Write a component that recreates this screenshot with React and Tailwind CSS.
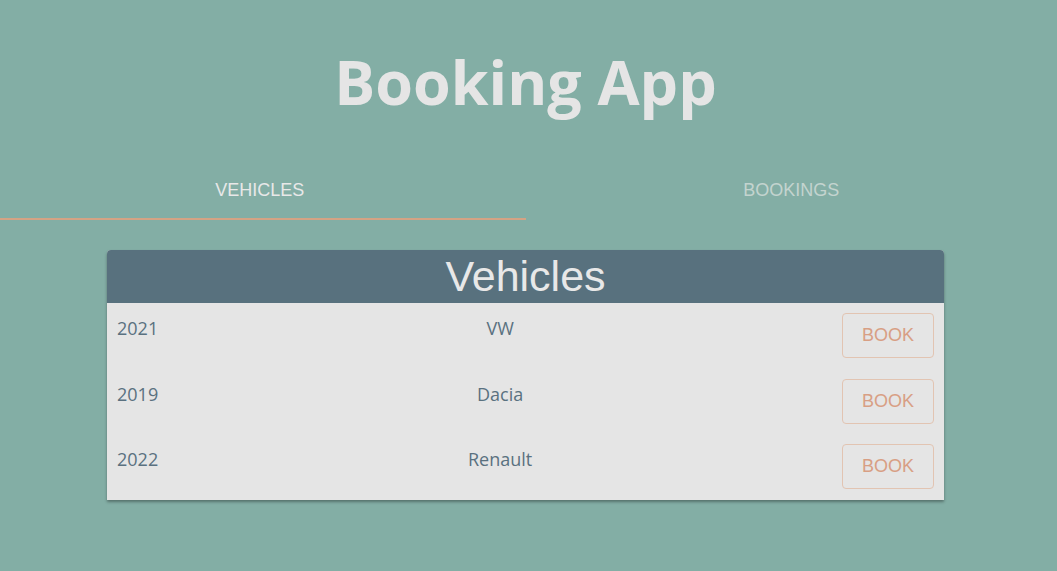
const vehicles = [
  { year: 2021, brand: 'VW' },
  { year: 2019, brand: 'Dacia' },
  { year: 2022, brand: 'Renault' },
]

function VehicleRow({ year, brand }) {
  return (
    <div className="flex justify-between items-start px-[10px] pt-[10px] pb-[10.5px]">
      <span className="text-[18px] leading-[30px] text-[#5a7180] font-['Open_Sans',sans-serif]">{year}</span>
      <span className="text-[18px] leading-[30px] text-[#5a7180] font-['Open_Sans',sans-serif]">{brand}</span>
      <button className="w-[92px] h-[45px] border border-[#e2c4b2] rounded-[4px] text-[18px] text-[#d89f84] font-['Liberation_Sans',sans-serif]">
        BOOK
      </button>
    </div>
  )
}

export default function App() {
  return (
    <div className="min-h-[571px] bg-[#83aea5] font-['Liberation_Sans',sans-serif]">
      <div className="w-[1051px]">
        <h1 className="pt-[39px] text-center text-[61px] leading-[86px] font-bold text-[#e5e5e5] font-['Open_Sans',sans-serif]">
          Booking App
        </h1>

        <div className="flex mt-[33px]">
          <div className="w-1/2 h-[62px] pt-[4px] pr-[6px] flex items-center justify-center border-b-2 border-[#d4a384] text-[18px] text-[#e8e8e8]">
            VEHICLES
          </div>
          <div className="w-1/2 h-[62px] pt-[2px] pl-[6px] flex items-center justify-center text-[18px] text-[#c3d4cf]">
            BOOKINGS
          </div>
        </div>

        <div className="mx-auto mt-[30px] w-[837px] rounded-t-[4px] bg-[#e5e5e5] shadow-[0_2px_3px_rgba(0,0,0,0.35)]">
          <div className="h-[53px] rounded-t-[4px] bg-[#58717e] flex items-center justify-center text-[43px] text-[#e8e8e8]">
            Vehicles
          </div>
          <div>
            {vehicles.map((v) => (
              <VehicleRow key={v.year} {...v} />
            ))}
          </div>
        </div>
      </div>
    </div>
  )
}
